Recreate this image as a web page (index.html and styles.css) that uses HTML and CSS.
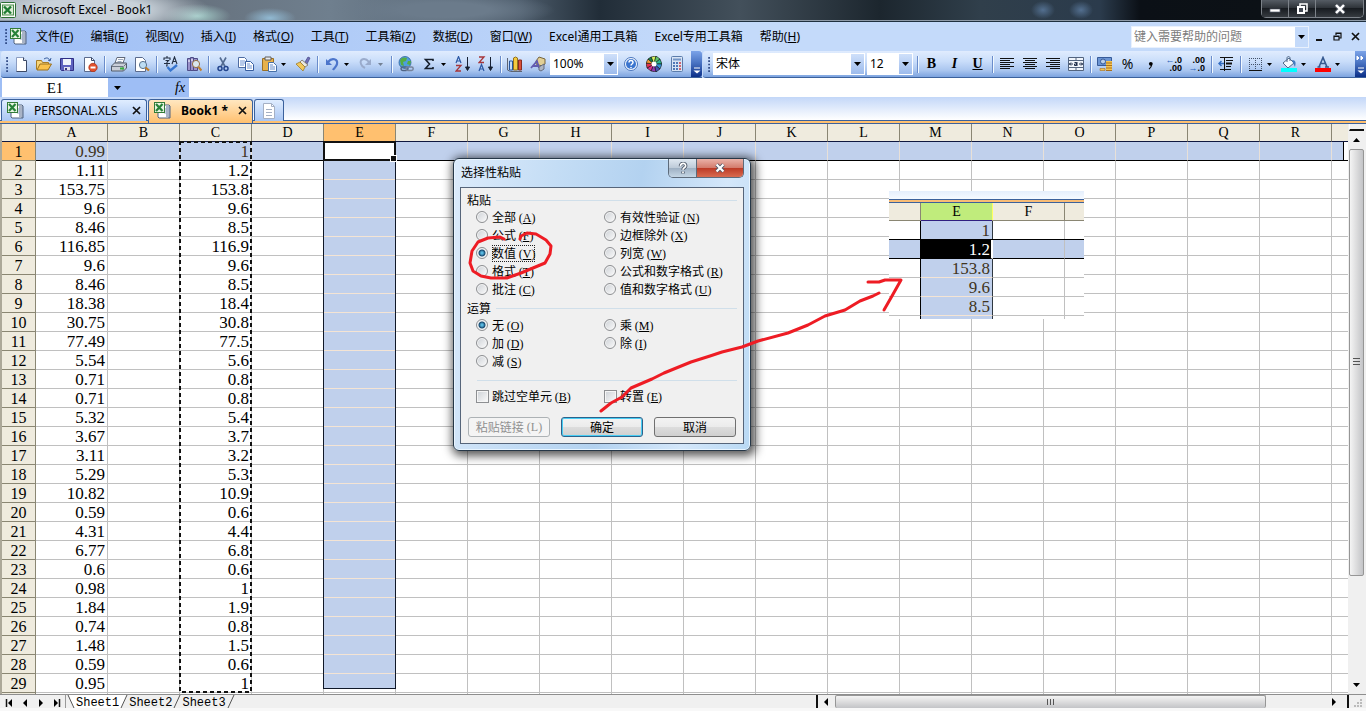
FILE: index.html
```html
<!DOCTYPE html>
<html lang="zh-CN">
<head>
<meta charset="utf-8">
<title>Microsoft Excel - Book1</title>
<link rel="stylesheet" href="styles.css">
</head>
<body>
<svg class="defs" aria-hidden="true">
  <symbol id="book" viewBox="0 0 17 17"><path d="M4 3h11l1 1v12H5l-1-1z" fill="#fff" stroke="#51637f"/><path d="M15 4v12M13 4v11" stroke="#52698e"/><path d="M10 7h3M10 9h3M10 11h3" stroke="#99abc7"/><rect x=".5" y=".5" width="10" height="10" fill="#e9f5e2" stroke="#347b38"/><path d="M2 2l6.500 7M8.500 2L2 9" stroke="#278238" stroke-width="2.200"/></symbol>
  <symbol id="down" viewBox="0 0 7 4"><path d="M0 0h7L3.500 4z"/></symbol>
  <symbol id="grip" viewBox="0 0 3 18"><path d="M0 1h2M0 5h2M0 9h2M0 13h2M0 17h2" stroke="#27417e" stroke-width="2"/></symbol>
  <symbol id="cross" viewBox="0 0 9 9"><path d="M1 1l7 7M8 1L1 8" stroke="#111" stroke-width="1.700"/></symbol>
</svg>

<header class="titlebar">
  <svg class="app-icon" viewBox="0 0 16 16"><rect x=".5" y=".5" width="15" height="15" rx="1" fill="#fafcf8" stroke="#2c7034"/><rect x="2.500" y="3" width="11" height="10" fill="#dcecd5" stroke="#4d8d4f"/><path d="M4 4.500l7 7M11 4.500l-7 7" stroke="#1d7c31" stroke-width="2.400"/></svg>
  <h1>Microsoft Excel - Book1</h1>
  <div class="window-buttons">
    <button aria-label="最小化"><svg viewBox="0 0 14 12"><rect x="2" y="6" width="10" height="3" fill="#fff" stroke="#5b6270" stroke-width=".7"/></svg></button>
    <button aria-label="还原"><svg viewBox="0 0 14 12"><path d="M5 3V1h7v7h-2" fill="none" stroke="#fff" stroke-width="1.500"/><rect x="3" y="4" width="6" height="6" fill="#444a54" stroke="#fff" stroke-width="2"/></svg></button>
    <button class="wide" aria-label="关闭"><svg viewBox="0 0 14 12"><path d="M3 2l8 8M11 2l-8 8" stroke="#555b66" stroke-width="4"/><path d="M3 2l8 8M11 2l-8 8" stroke="#fff" stroke-width="2.400"/></svg></button>
  </div>
</header>

<nav class="menubar">
  <svg class="grip"><use href="#grip"/></svg>
  <svg class="book"><use href="#book"/></svg>
  <div class="menus">
    <button>文件(<u>F</u>)</button><button>编辑(<u>E</u>)</button><button>视图(<u>V</u>)</button><button>插入(<u>I</u>)</button><button>格式(<u>O</u>)</button><button>工具(<u>T</u>)</button><button>工具箱(<u>Z</u>)</button><button>数据(<u>D</u>)</button><button>窗口(<u>W</u>)</button><button>Excel通用工具箱</button><button>Excel专用工具箱</button><button>帮助(<u>H</u>)</button>
  </div>
  <div class="ask"><input type="text" aria-label="帮助" placeholder="键入需要帮助的问题"><button aria-label="展开"><svg class="down"><use href="#down"/></svg></button></div>
  <div class="doc-buttons">
    <button aria-label="最小化窗口"><svg viewBox="0 0 9 9"><path d="M1 8h6" stroke="#111" stroke-width="2"/></svg></button>
    <button aria-label="还原窗口"><svg viewBox="0 0 9 9"><path d="M3 3V1h5v5H6M3 1.500h5" fill="none" stroke="#111" stroke-width="1.200"/><path d="M1 4h5v4H1zM1 4.500h5" fill="none" stroke="#111" stroke-width="1.200"/></svg></button>
    <button aria-label="关闭窗口"><svg><use href="#cross"/></svg></button>
  </div>
</nav>

<div class="toolbars">
<div class="toolbar" role="toolbar" aria-label="常用">
  <svg class="grip"><use href="#grip"/></svg>
  <button class="tool" aria-label="新建"><svg viewBox="0 0 16 16"><path d="M3.500 1.500h7l3 3v11h-10z" fill="#fff" stroke="#8b9cc0"/><path d="M13.500 4.500v11h-10" fill="none" stroke="#3b4966"/><path d="M10.500 1.500v3h3" fill="#dbe4f4" stroke="#3b4966"/></svg></button>
  <button class="tool" aria-label="打开"><svg viewBox="0 0 16 16"><path d="M.5 13.500v-9h5l1 2h6v3" fill="#f7d57a" stroke="#a87d26"/><path d="M1 14l3-6h11.500l-3.500 6z" fill="#f9c24b" stroke="#9a701f"/><path d="M8 3c3-2 5-1 6 2m0 0l-2-1m2 1l1-3" fill="none" stroke="#3a5f9f"/></svg></button>
  <button class="tool" aria-label="保存"><svg viewBox="0 0 16 16"><path d="M1.500 2.500h13v12h-12l-1-1z" fill="#5d62bf" stroke="#302f85"/><path d="M4 3h8v6H4z" fill="#eef3fb"/><path d="M5 11h6v3.500H5z" fill="#dfe0ef"/><path d="M6 12h2v2H6z" fill="#34347f"/></svg></button>
  <button class="tool" aria-label="权限"><svg viewBox="0 0 16 16"><path d="M2.500 1.500h7l3 3v11h-10z" fill="#fff" stroke="#5b6b8d"/><path d="M9.500 1.500v3h3" fill="none" stroke="#3b4966"/><circle cx="11" cy="11.500" r="4.200" fill="#e2512c" stroke="#a82c17" stroke-width=".7"/><path d="M8.500 11.500h5" stroke="#fff" stroke-width="2"/></svg></button>
  <span class="sep"></span>
  <button class="tool" aria-label="打印"><svg viewBox="0 0 16 16"><path d="M4 7l2-5.500h8L12 7z" fill="#fff" stroke="#61697a"/><path d="M7 3.500h5M6.500 5.500h4" stroke="#9ba8be"/><path d="M.5 10l3-3h12v5l-3 3h-12z" fill="#c9ced8" stroke="#515a69"/><path d="M1 10.500h11V15M12.500 10.500l3-3" fill="none" stroke="#6f7786"/><path d="M9 12.500h4" stroke="#35b13c" stroke-width="2"/></svg></button>
  <button class="tool" aria-label="打印预览"><svg viewBox="0 0 16 16"><path d="M1.500 1.500h7l3 3v11h-10z" fill="#fff" stroke="#5b6b8d"/><circle cx="9" cy="9" r="3.600" fill="#bdddf3" stroke="#59728e"/><path d="M11.500 11.500l3.500 3" stroke="#bd7b28" stroke-width="2.300"/></svg></button>
  <span class="sep"></span>
  <button class="tool" aria-label="拼写检查"><svg viewBox="0 0 16 16"><path d="M4 0v2M1 4V2h6v2M2.500 4.500h3L4 6M1 7.500h6M4 6v4H3M9 8l2.500-7L14 8M10 5.500h3" fill="none" stroke="#222e42" stroke-width="1.100"/><path d="M4.500 11l3 3.500L14 9" fill="none" stroke="#3675cf" stroke-width="2.300"/></svg></button>
  <button class="tool" aria-label="信息检索"><svg viewBox="0 0 16 16"><path d="M1.500 2.500h3v12h-3zM4.500 1.500h3v13h-3zM7.500 2.500h4v12h-4z" fill="#9b92ca" stroke="#4f4d88"/><path d="M2 5h2M5 4h2" stroke="#fff"/><circle cx="10" cy="8" r="3.600" fill="#d9e7ee" stroke="#967142"/><path d="M12.500 11l3 3.500" stroke="#c3802c" stroke-width="2.200"/></svg></button>
  <span class="sep"></span>
  <button class="tool" aria-label="剪切"><svg viewBox="0 0 16 16"><path d="M5 1.500l5 9M11 1.500l-5 9" stroke="#536b91" stroke-width="1.600"/><circle cx="5" cy="12.500" r="2" fill="none" stroke="#23458e" stroke-width="1.500"/><circle cx="11" cy="12.500" r="2" fill="none" stroke="#23458e" stroke-width="1.500"/></svg></button>
  <button class="tool" aria-label="复制"><svg viewBox="0 0 16 16"><path d="M.5 1.500h6l2 2v8h-8z" fill="#fff" stroke="#4e6ca2"/><path d="M2 5h5M2 7h5M2 9h4" stroke="#6f94d5"/><path d="M7.500 5.500h5l3 3v6h-8z" fill="#fff" stroke="#365da0"/><path d="M9 8h3M9 10h5M9 12h5" stroke="#6f94d5"/></svg></button>
  <button class="tool" aria-label="粘贴"><svg viewBox="0 0 16 16"><path d="M1.500 2.500h11v12h-11z" fill="#e7b14c" stroke="#9a7026"/><path d="M4 1h6v3H4z" fill="#e9ebef" stroke="#615f5a"/><path d="M7.500 6.500h5l3 3v6h-8z" fill="#f9fcff" stroke="#4770a8"/><path d="M9 9h3M9 11h5M9 13h5" stroke="#6b8fca"/></svg></button>
  <button class="drop" aria-label="粘贴选项"><svg class="down"><use href="#down"/></svg></button>
  <button class="tool" aria-label="格式刷"><svg viewBox="0 0 16 16"><path d="M10 6l3-5 2 1-3 6z" fill="#7070b8" stroke="#464685" stroke-width=".7"/><path d="M7 4l6 5-3 2-5-5z" fill="#e9e8e1" stroke="#787060" stroke-width=".8"/><path d="M1 8l4-2 5 5-2 4z" fill="#f1c85c" stroke="#9d7c2d" stroke-width=".8"/></svg></button>
  <span class="sep"></span>
  <button class="tool" aria-label="撤消"><svg viewBox="0 0 16 16"><path d="M4 6c4-5 10-3 9 2-.5 3-3 4-4 6" fill="none" stroke="#4c75cb" stroke-width="2.200"/><path d="M2 3v6h6z" fill="#4c75cb"/></svg></button>
  <button class="drop" aria-label="撤消列表"><svg class="down"><use href="#down"/></svg></button>
  <button class="tool" aria-label="恢复"><svg viewBox="0 0 16 16"><path d="M11 6C7 1 1 3 3 8c.5 2 2 3 4 4" fill="none" stroke="#9aabcb" stroke-width="2"/><path d="M13 3v6H7z" fill="#9aabcb"/></svg></button>
  <button class="drop muted" aria-label="恢复列表"><svg class="down"><use href="#down"/></svg></button>
  <span class="sep"></span>
  <button class="tool" aria-label="超链接"><svg viewBox="0 0 16 16"><circle cx="7" cy="6.500" r="6" fill="#4e9edf" stroke="#2f6299" stroke-width=".8"/><path d="M2 4c2-3 4-3 7-2L8 5 5 6l1 4-3-1zM10 5l3 0-1 4-3-1z" fill="#55ad42"/><rect x="3" y="11" width="7" height="3.500" rx="1.700" fill="none" stroke="#4f6485" stroke-width="1.500"/><rect x="8" y="11" width="7.200" height="3.500" rx="1.700" fill="none" stroke="#76839c" stroke-width="1.500"/></svg></button>
  <button class="tool" aria-label="自动求和"><svg viewBox="0 0 16 16"><path d="M12 5V3.500H4.500L8.500 8l-4 4.500H12V11" fill="none" stroke="#151e2b" stroke-width="1.600"/></svg></button>
  <button class="drop" aria-label="求和选项"><svg class="down"><use href="#down"/></svg></button>
  <button class="tool" aria-label="升序排序"><svg viewBox="0 0 16 16"><path d="M1 7l2.500-6.500L6 7M2 5h3" fill="none" stroke="#2b58a5" stroke-width="1.200"/><path d="M1 9.500h5L1 15h5" fill="none" stroke="#a63539" stroke-width="1.300"/><path d="M12.500 1v13M10.500 11l2 3.500 2-3.500z" fill="#172133" stroke="#172133"/></svg></button>
  <button class="tool" aria-label="降序排序"><svg viewBox="0 0 16 16"><path d="M1 1h5L1 6.500h5" fill="none" stroke="#a63539" stroke-width="1.300"/><path d="M1 15l2.500-6.500L6 15M2 13h3" fill="none" stroke="#2b58a5" stroke-width="1.200"/><path d="M12.500 1v13M10.500 11l2 3.500 2-3.500z" fill="#172133" stroke="#172133"/></svg></button>
  <span class="sep"></span>
  <button class="tool" aria-label="图表向导"><svg viewBox="0 0 16 16"><path d="M.5 2v12l3 1.500H15" fill="none" stroke="#5d6472"/><path d="M2.500 5h3v9h-3z" fill="#c3daf5" stroke="#28569b"/><path d="M6.500 2l2-1 2 1v12h-4z" fill="#f5ca3e" stroke="#93721b"/><path d="M11.500 4h3v10h-3z" fill="#da5037" stroke="#882c21"/></svg></button>
  <button class="tool" aria-label="绘图"><svg viewBox="0 0 16 16"><path d="M6 5l3-4 6 2v5l-3 2-6-2z" fill="#e2cf94" stroke="#77653c"/><path d="M1 12L7 5l2 7M3 10h5" fill="none" stroke="#625bb0" stroke-width="1.800"/><path d="M9 11l5-3v5l-3 2-2-1z" fill="#aeb5c2" stroke="#646d81"/></svg></button>
  <label class="combo zoom"><select aria-label="显示比例"><option>100%</option></select><span><svg class="down"><use href="#down"/></svg></span></label>
  <button class="tool" aria-label="帮助"><svg viewBox="0 0 16 16"><circle cx="8" cy="8" r="6.500" fill="#f6faff" stroke="#4b76bd"/><circle cx="8" cy="8" r="5" fill="#3b75cf"/><path d="M6 6.500c0-3 4-2.500 4 0C10 8 8 8 8 9.500M8 11v1.200" fill="none" stroke="#fff" stroke-width="1.500"/></svg></button>
  <button class="tool" aria-label="颜色"><svg viewBox="0 0 16 16"><g stroke="#111" stroke-width=".6"><path d="M8 8L5 1l5-1z" fill="#d9f25f"/><path d="M8 8l2-8 4 3z" fill="#60c56b"/><path d="M8 8l6-5 2 5z" fill="#2bb58b"/><path d="M8 8h8l-2 5z" fill="#3493d4"/><path d="M8 8l6 5-4 3z" fill="#4452b3"/><path d="M8 8l2 8-5-1z" fill="#913ab1"/><path d="M8 8l-3 7-4-3z" fill="#d62f8c"/><path d="M8 8l-7 4-1-5z" fill="#e4304d"/><path d="M8 8L0 7l2-4z" fill="#f19a38"/><path d="M8 8L2 3l3-2z" fill="#198348"/></g><circle cx="8" cy="8" r="2.500" fill="#fff"/></svg></button>
  <button class="tool" aria-label="计算器"><svg viewBox="0 0 16 16"><rect x="2.500" y=".5" width="11" height="15" rx="1" fill="#d8e4f5" stroke="#5b7cab"/><path d="M4 3.500h8" stroke="#7596c7" stroke-width="2"/><path d="M4 7h2M7 7h2M4 10h2M7 10h2M4 13h2M7 13h2" stroke="#5179b8" stroke-width="2"/><path d="M10 7h2M10 10h2M10 13h2" stroke="#ce6570" stroke-width="2"/></svg></button>
  <button class="cap first" aria-label="工具栏选项"><svg viewBox="0 0 9 22"><path d="M2 15h6" stroke="#fff"/><path d="M1.500 17.500h7l-3.500 3z" fill="#fff"/></svg></button>
</div>
<div class="toolbar formatting" role="toolbar" aria-label="格式">
  <svg class="grip"><use href="#grip"/></svg>
  <label class="combo font"><select aria-label="字体"><option>宋体</option></select><span><svg class="down"><use href="#down"/></svg></span></label>
  <label class="combo size"><select aria-label="字号"><option>12</option></select><span><svg class="down"><use href="#down"/></svg></span></label>
  <span class="sep"></span>
  <button class="tool letter"><b>B</b></button><button class="tool letter"><i>I</i></button><button class="tool letter"><u>U</u></button>
  <span class="sep"></span>
  <button class="tool" aria-label="左对齐"><svg viewBox="0 0 16 16"><path d="M1 2.500h14M1 4.500h10M1 6.500h14M1 8.500h10M1 10.500h14M1 12.500h10" stroke="#111"/></svg></button>
  <button class="tool" aria-label="居中"><svg viewBox="0 0 16 16"><path d="M1 2.500h14M3 4.500h10M1 6.500h14M3 8.500h10M1 10.500h14M3 12.500h10" stroke="#111"/></svg></button>
  <button class="tool" aria-label="右对齐"><svg viewBox="0 0 16 16"><path d="M1 2.500h14M5 4.500h10M1 6.500h14M5 8.500h10M1 10.500h14M5 12.500h10" stroke="#111"/></svg></button>
  <button class="tool" aria-label="合并及居中"><svg viewBox="0 0 16 16"><path d="M.5 1.500h15v13H.5zM.5 4.500h15M.5 11.500h15M8 1.500v3M8 11.500v3" fill="#f1f5fb" stroke="#53647f"/><path d="M1 8h4M3 6.500L1.500 8 3 9.500M15 8h-4M13 6.500L14.500 8 13 9.500M6.500 6.500h2v3h-2v-1.500h2M9 6v4" fill="none" stroke="#1c2b46"/></svg></button>
  <span class="sep"></span>
  <button class="tool" aria-label="货币样式"><svg viewBox="0 0 16 16"><path d="M.5 1.500h14v8H.5z" fill="#6b94d3" stroke="#375b99"/><circle cx="6" cy="5.500" r="2.500" fill="#b9cfeb" stroke="#385b98"/><rect x="9" y="5" width="6" height="10" fill="#f4c451"/><path d="M9 7h6M9 9.500h6M9 12h6M9 14.500h6" stroke="#a9701f"/><path d="M3 12.500h5v2H3z" fill="#f4c451" stroke="#a9701f" stroke-width=".6"/></svg></button>
  <button class="tool percent">%</button>
  <button class="tool" aria-label="千位分隔样式"><svg viewBox="0 0 16 16"><path d="M8.500 9c0 2-1 3-2.500 4" fill="none" stroke="#111" stroke-width="1.200"/><circle cx="7.800" cy="7.800" r="1.900"/></svg></button>
  <button class="tool decimal" aria-label="增加小数位数"><span><em>←</em>.0</span><span>.00</span></button>
  <button class="tool decimal" aria-label="减少小数位数"><span>.00</span><span><em>→</em>.0</span></button>
  <span class="sep"></span>
  <button class="tool" aria-label="减少缩进"><svg viewBox="0 0 16 16"><path d="M2 1.500h13M8 4.500h7M8 10.500h5M2 13.500h11M6.500 1v14" stroke="#111"/><path d="M8 7.500h6" stroke="#111" stroke-width="2"/><path d="M6 7.500H1M3.500 5L1 7.500 3.500 10" fill="none" stroke="#316bc0" stroke-width="1.500"/></svg></button>
  <span class="sep"></span>
  <button class="tool" aria-label="边框"><svg viewBox="0 0 16 16"><path d="M2 2.500h12M2 8.500h12M2.500 2v12M8.500 2v12M14.500 2v12" stroke="#425168" stroke-dasharray="1 1"/><path d="M2 14.500h13" stroke="#111"/></svg></button>
  <button class="drop" aria-label="边框选项"><svg class="down"><use href="#down"/></svg></button>
  <button class="tool" aria-label="填充颜色"><svg viewBox="0 0 16 16"><path d="M2 7l6-5 5 5-6 5z" fill="#f7faff" stroke="#506988"/><path d="M6 6V2c0-2 3-2 3 0v3" fill="none" stroke="#506988"/><path d="M11 4c4 0 4 3 3 7l-2-4z" fill="#447bbf"/><path d="M0 12h16v4H0z" fill="#0ff"/></svg></button>
  <button class="drop" aria-label="填充选项"><svg class="down"><use href="#down"/></svg></button>
  <button class="tool" aria-label="字体颜色"><svg viewBox="0 0 16 16"><path d="M4 11L8 1.500l4 9.500M5.500 7.500h5M2.500 11h3M10 11h4" fill="none" stroke="#36598f" stroke-width="1.600"/><path d="M0 12h16v4H0z" fill="#f00"/></svg></button>
  <button class="drop" aria-label="颜色选项"><svg class="down"><use href="#down"/></svg></button>
  <button class="cap last" aria-label="更多按钮"><svg viewBox="0 0 9 22"><path d="M1 3l2 2-2 2zM5 3l2 2-2 2z" fill="#fff" stroke="#fff"/><path d="M2 15h6" stroke="#fff"/><path d="M1.500 17.500h7l-3.500 3z" fill="#fff"/></svg></button>
</div>
</div>

<div class="formula-bar">
  <input class="name-box" type="text" aria-label="名称框" value="E1">
  <button class="name-drop" aria-label="名称列表"><svg class="down"><use href="#down"/></svg></button>
  <button class="fx" aria-label="插入函数">fx</button>
  <input class="formula" type="text" aria-label="编辑栏">
</div>

<div class="doc-tabs">
  <div class="doc-tab personal"><svg class="book"><use href="#book"/></svg><span>PERSONAL.XLS</span><button aria-label="关闭 PERSONAL.XLS"><svg><use href="#cross"/></svg></button></div>
  <div class="doc-tab active"><svg class="book"><use href="#book"/></svg><span>Book1 *</span><button aria-label="关闭 Book1"><svg><use href="#cross"/></svg></button></div>
  <button class="doc-tab blank" aria-label="新建工作簿"><svg viewBox="0 0 14 16"><path d="M1.500.5h8l3 3v12h-11z" fill="#fff" stroke="#a5b0c4"/><path d="M9.500.5v3h3M4 6.500h6M4 9.500h6M4 12.500h6" fill="none" stroke="#a5b0c4"/></svg></button>
</div>

<main class="workspace">
  <div class="sheet">
    <table class="grid"><thead></thead><tbody></tbody></table>
    <div class="column-selection"></div>
    <div class="active-cell"></div>
    <div class="row-end"></div>
    <svg class="copied-range"><rect x="1" y="1" width="71" height="550" fill="none" stroke="#111" stroke-width="2" stroke-dasharray="4 3"/></svg>
  </div>
  <div class="vscroll">
    <div class="split"></div>
    <button aria-label="向上滚动"><svg viewBox="0 0 7 4"><path d="M0 4h7L3.500 0z"/></svg></button>
    <div class="track"><div class="thumb"><i></i><i></i><i></i></div></div>
    <button aria-label="向下滚动"><svg class="down"><use href="#down"/></svg></button>
  </div>
</main>

<footer class="bottom">
  <div class="sheet-nav">
    <button aria-label="第一张"><svg viewBox="0 0 8 8"><path d="M1.500 0v8" stroke="#111" stroke-width="1.500"/><path d="M7 0L3 4l4 4z"/></svg></button>
    <button aria-label="上一张"><svg viewBox="0 0 8 8"><path d="M6 0L2 4l4 4z"/></svg></button>
    <button aria-label="下一张"><svg viewBox="0 0 8 8"><path d="M2 0l4 4-4 4z"/></svg></button>
    <button aria-label="最后一张"><svg viewBox="0 0 8 8"><path d="M6.500 0v8" stroke="#111" stroke-width="1.500"/><path d="M1 0l4 4-4 4z"/></svg></button>
  </div>
  <div class="sheet-tabs">
    <svg class="slash" viewBox="0 0 10 13"><path d="M2 0h8v13H8z" fill="#fff"/><path d="M2 0l6 13" stroke="#555"/></svg>
    <button class="current">Sheet1</button>
    <svg class="slash" viewBox="0 0 10 13"><path d="M0 0h8L2 13H0z" fill="#fff"/><path d="M8 0L2 13" stroke="#555"/></svg>
    <button>Sheet2</button>
    <svg class="slash" viewBox="0 0 10 13"><path d="M8 0L2 13" stroke="#555"/></svg>
    <button>Sheet3</button>
    <svg class="slash" viewBox="0 0 10 13"><path d="M8 0L2 13" stroke="#555"/></svg>
  </div>
  <div class="hscroll">
    <button aria-label="向左滚动"><svg viewBox="0 0 5 8"><path d="M4 0v8L0 4z"/></svg></button>
    <div class="track"><div class="thumb"><i></i><i></i><i></i></div></div>
    <button aria-label="向右滚动"><svg viewBox="0 0 5 8"><path d="M1 0v8l4-4z"/></svg></button>
  </div>
  <div class="corner"><svg viewBox="0 0 10 10"><path d="M8 2h2M5 5h2M8 5h2M2 8h2M5 8h2M8 8h2" stroke="#bbb" stroke-width="2"/></svg></div>
</footer>

<section class="dialog" role="dialog" aria-labelledby="dialog-title">
  <header>
    <h2 id="dialog-title">选择性粘贴</h2>
    <div class="dialog-buttons">
      <button aria-label="帮助"><svg viewBox="0 0 14 14"><path d="M4 5c0-5 7-4 6 0-.5 2-3 1.500-3 4M7 11v2.500" fill="none" stroke="#4b5667" stroke-width="4"/><path d="M4 5c0-5 7-4 6 0-.5 2-3 1.500-3 4M7 11v2" fill="none" stroke="#fff" stroke-width="2"/></svg></button>
      <button class="close" aria-label="关闭"><svg viewBox="0 0 14 14"><path d="M3 3l8 8M11 3l-8 8" stroke="#50596a" stroke-width="4.500"/><path d="M3 3l8 8M11 3l-8 8" stroke="#fff" stroke-width="2.600"/></svg></button>
    </div>
  </header>
  <form>
    <div class="group-title"><span>粘贴</span></div>
    <div class="options">
      <label><input type="radio" name="paste"><span>全部 <kbd>(<u>A</u>)</kbd></span></label>
      <label><input type="radio" name="paste"><span>有效性验证 <kbd>(<u>N</u>)</kbd></span></label>
      <label><input type="radio" name="paste"><span>公式 <kbd>(<u>F</u>)</kbd></span></label>
      <label><input type="radio" name="paste"><span>边框除外 <kbd>(<u>X</u>)</kbd></span></label>
      <label><input type="radio" name="paste" checked><span class="focused">数值 <kbd>(<u>V</u>)</kbd></span></label>
      <label><input type="radio" name="paste"><span>列宽 <kbd>(<u>W</u>)</kbd></span></label>
      <label><input type="radio" name="paste"><span>格式 <kbd>(<u>T</u>)</kbd></span></label>
      <label><input type="radio" name="paste"><span>公式和数字格式 <kbd>(<u>R</u>)</kbd></span></label>
      <label><input type="radio" name="paste"><span>批注 <kbd>(<u>C</u>)</kbd></span></label>
      <label><input type="radio" name="paste"><span>值和数字格式 <kbd>(<u>U</u>)</kbd></span></label>
    </div>
    <div class="group-title next"><span>运算</span></div>
    <div class="options">
      <label><input type="radio" name="op" checked><span>无 <kbd>(<u>O</u>)</kbd></span></label>
      <label><input type="radio" name="op"><span>乘 <kbd>(<u>M</u>)</kbd></span></label>
      <label><input type="radio" name="op"><span>加 <kbd>(<u>D</u>)</kbd></span></label>
      <label><input type="radio" name="op"><span>除 <kbd>(<u>I</u>)</kbd></span></label>
      <label><input type="radio" name="op"><span>减 <kbd>(<u>S</u>)</kbd></span></label>
    </div>
    <hr>
    <div class="options">
      <label><input type="checkbox"><span>跳过空单元 <kbd>(<u>B</u>)</kbd></span></label>
      <label><input type="checkbox"><span>转置 <kbd>(<u>E</u>)</kbd></span></label>
    </div>
    <div class="actions">
      <button type="button" disabled>粘贴链接 <kbd>(L)</kbd></button>
      <button type="button" class="default">确定</button>
      <button type="button">取消</button>
    </div>
  </form>
</section>

<figure class="result">
  <div class="strip"></div>
  <table>
    <tr><th></th><th class="picked">E</th><th>F</th><th></th></tr>
    <tr><td></td><td class="picked">1</td><td></td><td></td></tr>
    <tr class="active-row"><td></td><td class="current">1.2</td><td></td><td></td></tr>
    <tr><td></td><td class="picked">153.8</td><td></td><td></td></tr>
    <tr><td></td><td class="picked">9.6</td><td></td><td></td></tr>
    <tr><td></td><td class="picked">8.5</td><td></td><td></td></tr>
    <tr><td></td><td class="picked"></td><td></td><td></td></tr>
  </table>
</figure>

<svg class="ink" viewBox="460 220 450 200" aria-hidden="true">
  <g fill="none" stroke="#ee1c24" stroke-width="3" stroke-linecap="round" stroke-linejoin="round">
    <path d="M504 239L500 237 488 238 478 242 472 251 470 263 473 271 481 276 491 278 507 278 521 273 533 268 545 263 550 254 551 246 546 240 536 234 527 233 521 236 520 239"/>
    <path d="M601 411L611 403 622 397 631 388 652 379 664 373 691 362 710 356 722 352 742 347 758 341 788 333 808 325 825 316 845 310 860 301 873 296 879 293"/>
    <path d="M868 282L879 282 885 280 901 280 892 296 884 310"/>
  </g>
</svg>
<script src="app.js"></script>
</body>
</html>
```
FILE: styles.css
```css
* { box-sizing: border-box; }
:root {
  --ui: "Noto Sans", "Noto Sans CJK SC", sans-serif;
  --cell: "Liberation Serif", "Noto Sans CJK SC", serif;
  --selected: #c0d0ec;
  --header: #efebde;
  --orange: #ffc06f;
}
body { margin: 0; height: 100vh; display: flex; flex-direction: column; overflow: hidden; background: #c3d9f9; font: 12px/16px var(--ui); color: #000; position: relative; }
button, input, select { font: inherit; color: inherit; border: 0; padding: 0; margin: 0; background: none; border-radius: 0; outline: 0; }
button { display: flex; align-items: center; justify-content: center; white-space: nowrap; }
svg { display: block; flex: none; }
.defs { position: absolute; width: 0; height: 0; }
.down { width: 7px; height: 4px; }
.grip { width: 3px; height: 18px; }
.book { width: 17px; height: 17px; }

/* Title bar */
.titlebar { flex: none; height: 22px; display: flex; align-items: center; padding: 0 2px 2px 0; border-bottom: 1px solid #20303f; box-shadow: inset 0 -1px #8f9ba8;
  background: radial-gradient(ellipse 120px 26px at 90px 10px, #c9d2da 45%, transparent), radial-gradient(ellipse 34px 12px at 197px 16px, #a6cfcb, transparent), radial-gradient(ellipse 26px 10px at 270px 18px, #91b9d2, transparent), radial-gradient(ellipse 110px 18px at 445px 10px, #6b7b8b 40%, transparent), radial-gradient(ellipse 12px 9px at 1043px 10px, #536f8f, transparent), radial-gradient(ellipse 12px 9px at 1081px 10px, #536f8f, transparent), linear-gradient(90deg, #a3adb7, #66717d 180px, #6f7f8e 330px, #4d5c6b 520px, #212d38 600px, #43505b 740px, #1c262e 880px, #303f4b 980px, #2b3b4c 1100px, #0b1016 1140px, #0c1116 1260px, #252b32); }
.app-icon { width: 16px; height: 16px; }
.titlebar h1 { margin: 0 0 0 6px; font: 12px/20px var(--ui); }
.window-buttons { align-self: flex-start; margin-left: auto; display: flex; height: 18px; border: 1px solid #7c8289; border-top: 0; border-radius: 0 0 5px 5px; }
.window-buttons button { width: 27px; background: linear-gradient(#555c64, #2b3036 50%, #181c21 50%, #353a40); border-right: 1px solid #7c8289; }
.window-buttons .wide { width: 47px; border: 0; border-radius: 0 0 4px 0; }
.window-buttons svg { width: 14px; height: 12px; }

/* Menu bar */
.menubar { flex: none; height: 29px; display: flex; align-items: center; padding: 0 6px 0 5px; background: linear-gradient(90deg, #9ebef5, #c4dafa 700px); }
.menubar .book { margin: 0 9px 0 2px; }
.menubar .grip { height: 15px; }
.menus { display: flex; gap: 17px; flex: 1; min-width: 0; }
.ask { display: flex; width: 178px; height: 22px; background: #fff; border: 1px solid #e9f1fd; }
.ask input { flex: 1; min-width: 0; padding-left: 2px; }
.ask input::placeholder { color: #7c7c7c; opacity: 1; }
.ask button { width: 13px; background: #c4dafa; }
.doc-buttons { display: flex; gap: 9px; margin-left: 6px; }
.doc-buttons svg { width: 9px; height: 9px; }

/* Toolbars */
.toolbars { flex: none; display: flex; height: 27px; background: #c3d9f9; }
.toolbar { display: flex; align-items: center; padding-left: 5px; margin-left: 1px; border-bottom: 1px solid #3b619c; border-radius: 3px 0 0 3px; background: linear-gradient(#e0ecfe, #c9ddfa 40%, #a9c5ef 75%, #7ca3df); }
.toolbar .grip { height: 15px; }
.formatting { flex: 1; padding-left: 5px; }
.formatting .grip { margin-right: 1px; }
.tool { width: 23px; height: 23px; }
.tool svg { width: 16px; height: 16px; }
.drop { width: 11px; height: 23px; padding-right: 4px; }
.drop .down { width: 5px; height: 3px; }
.muted { opacity: .4; }
.sep { flex: none; width: 6px; height: 17px; border-left: 1px solid #6a8ccb; border-right: 4px solid transparent; background: #f1f9ff; background-clip: padding-box; margin-left: 3px; margin-right: -3px; }
.combo { display: flex; flex: none; height: 22px; background: #fff; }
.combo select { appearance: none; flex: 1; min-width: 0; padding: 0 0 1px 3px; }
.combo > span { width: 15px; display: flex; align-items: center; justify-content: center; border: 1px solid #fff; background: linear-gradient(#cfe0fa, #9dbbec); }
.zoom { width: 68px; margin: 0 1px; }
.font { width: 152px; margin: 0 1px; }
.size { width: 46px; margin: 0 1px; }
.letter { font: bold 14px/20px "Liberation Serif", serif; }
.percent { font: 14px/20px "Open Sans", sans-serif; }
.decimal { flex-direction: column; align-items: flex-end; padding-right: 3px; font: bold 9px/8px "Liberation Sans", sans-serif; }
.decimal em { color: #2b61b8; font-style: normal; }
.cap { height: 26px; background: linear-gradient(#7ba3e8, #4a74c3 45%, #0b2f88); align-self: flex-start; }
.cap svg { width: 9px; height: 22px; }
.first { width: 11px; margin-left: 3px; border-radius: 0 3px 3px 0; }
.last { width: 11px; margin-left: auto; }

/* Formula bar */
.formula-bar { flex: none; display: flex; height: 19px; padding-left: 2px; background: #9ebef5; }
.name-box { width: 106px; background: #fff; text-align: center; font: 15px/18px var(--cell); }
.name-drop { width: 19px; }
.fx { width: 62px; padding-left: 48px; justify-content: flex-start; font: italic 14px/16px "Liberation Serif", serif; }
.formula { flex: 1; background: #fff; }

/* Workbook tabs */
.doc-tabs { flex: none; height: 27px; padding: 2px 0 0 1px; display: flex; gap: 1px; border-bottom: 1px solid #3b619c; background: linear-gradient(var(--orange), var(--orange)) 0 24px / 100% 2px no-repeat, linear-gradient(#3b619c, #3b619c) 0 23px / 100% 1px no-repeat, linear-gradient(#c3d7f8, #fff 23px); }
.doc-tab { height: 22px; display: flex; align-items: center; padding: 0 5px; border: 1px solid #3b619c; border-bottom: 0; border-radius: 3px 3px 0 0; background: linear-gradient(#e0edff, #a9c6f3); font-size: 12px; }
.doc-tab .book { margin-right: 10px; }
.doc-tab button { margin-left: auto; }
.doc-tab button svg { width: 9px; height: 9px; }
.personal { width: 146px; }
.doc-tab.active { width: 105px; height: 24px; padding-bottom: 2px; background: linear-gradient(#ffe7c0, var(--orange)); font-weight: bold; }
.doc-tab.blank { width: 30px; }
.blank svg { width: 14px; height: 16px; }

/* Worksheet */
.workspace { flex: 1; min-height: 0; display: flex; background: #fff; }
.sheet { flex: 1; min-width: 0; overflow: hidden; position: relative; border-left: 2px solid #aca899; }
.grid { table-layout: fixed; width: 1402px; border-collapse: separate; border-spacing: 0; font: 17px/16px var(--cell); }
.grid th, .grid td { height: 19px; padding: 2px 0 0; border-right: 1px solid #c0c0c0; border-bottom: 1px solid #c0c0c0; font-weight: normal; overflow: hidden; white-space: nowrap; }
.grid thead th { width: 72px; height: 18px; padding-top: 1px; font-size: 14px; background: var(--header); border-right-color: #8a8673; border-bottom-color: #101840; }
.grid thead th:first-child { width: 34px; }
.grid tbody th { background: var(--header); border-right-color: #8a8673; border-bottom-color: #8a8673; font-size: 16px; }
.grid .hot { background: var(--orange) !important; }
.grid td { text-align: right; padding-right: 2px; }
.grid .first-row td { background: var(--selected); border-bottom-color: #000; border-right-color: #e8e0d8; color: #403420; }
.column-selection { position: absolute; left: 321px; top: 17px; width: 73px; height: 548px; border: 1px solid #101828; background: repeating-linear-gradient(var(--selected) 0 18px, #f4e4d4 18px 19px); }
.active-cell { position: absolute; left: 321px; top: 17px; width: 73px; height: 20px; border: 2px solid #111; background: #fff; }
.active-cell::after { content: ""; position: absolute; right: -3px; bottom: -3px; width: 5px; height: 5px; background: #111; border: 1px solid #fff; }
.row-end { position: absolute; right: 0; top: 18px; width: 5px; height: 18px; border-left: 1px solid #000; background: #fff; }
.copied-range { position: absolute; left: 177px; top: 17px; width: 73px; height: 552px; }

/* Scrollbars */
.vscroll { flex: none; width: 18px; padding: 0 2px 0 1px; display: flex; flex-direction: column; background: #f0f0f0; }
.split { height: 7px; border-bottom: 2px solid #111; border-left: 1px solid #fff; }
.vscroll button { height: 18px; }
.vscroll button svg { width: 7px; height: 4px; }
.track { flex: 1; min-width: 0; min-height: 0; display: flex; }
.thumb { display: flex; align-items: center; justify-content: center; gap: 1px; border: 1px solid #969696; border-radius: 2px; background: linear-gradient(#f4f4f4, #dcdcdd 50%, #c3c4c7); }
.vscroll .track { display: block; }
.vscroll .thumb { height: 81%; flex-direction: column; background: linear-gradient(90deg, #f4f4f4, #dcdcdd 50%, #c3c4c7); }
.vscroll i { width: 7px; height: 2px; border-top: 1px solid #555; }
.bottom { flex: none; height: 17px; display: flex; border-top: 1px solid #8e8e8e; border-bottom: 3px solid #f8f8f8; background: #f0f0f0; }
.sheet-nav { display: flex; width: 66px; padding: 2px 0 0 1px; justify-content: space-between; border-right: 1px solid #999; }
.sheet-nav button { width: 15px; }
.sheet-nav svg { width: 8px; height: 8px; }
.sheet-tabs { flex: 1; min-width: 0; display: flex; overflow: hidden; font: 12px/12px "Liberation Mono", monospace; }
.sheet-tabs button { padding-top: 2px; }
.slash { width: 10px; height: 13px; }
.sheet-tabs .current { background: #fff; }
.hscroll { width: 39%; display: flex; border-left: 2px solid #111; border-right: 2px solid #111; }
.hscroll button { width: 17px; }
.hscroll > button svg { width: 5px; height: 8px; }
.hscroll button:last-child { margin-right: 5px; }
.hscroll .thumb { width: 88%; border-bottom: 0; }
.hscroll i { width: 2px; height: 6px; border-left: 1px solid #555; }
.corner { width: 17px; padding: 3px; }
.corner svg { width: 10px; height: 10px; }

/* Paste special dialog */
.dialog { position: absolute; left: 453px; top: 158px; width: 298px; padding: 0 6px 6px; border: 1px solid #263747; border-radius: 6px; box-shadow: 2px 2px 10px 3px rgba(0, 0, 0, .65), inset 0 0 0 1px #e9f5ff; background: linear-gradient(100deg, #dcebfb, #c4ddf5 30%, #b3d2f0 55%, #d4e7fa 80%, #b9d9f4); }
.dialog header { height: 28px; display: flex; align-items: center; justify-content: space-between; }
.dialog h2 { margin: 0 0 0 1px; font: 12px/16px var(--ui); }
.dialog-buttons { align-self: flex-start; display: flex; height: 19px; border: 1px solid #5d6b7b; border-top: 0; border-radius: 0 0 5px 5px; overflow: hidden; }
.dialog-buttons button { width: 28px; background: linear-gradient(#dfe8f1, #bdcad8 50%, #9dafc2 50%, #c5d6e5); border-right: 1px solid #5d6b7b; }
.dialog-buttons .close { width: 46px; border: 0; background: linear-gradient(#eab2a8, #d37a6b 50%, #bc3925 50%, #d96b50); }
.dialog-buttons svg { width: 12px; height: 12px; }
.dialog form { border: 1px solid #56657a; background: #f0f0f0; padding: 4px 6px 6px; font: 12px/16px "Noto Sans CJK SC", sans-serif; }
.dialog kbd { font: 12px/16px "Liberation Serif", serif; }
.group-title { height: 16px; display: flex; align-items: center; gap: 5px; }
.group-title.next { margin-top: 2px; }
.group-title::after { content: ""; flex: 1; height: 1px; background: #d0dfea; }
.options { display: grid; grid-template-columns: 128px 1fr; grid-auto-rows: 18px; padding-left: 9px; }
.options label { display: flex; align-items: center; white-space: nowrap; }
.options input { appearance: none; flex: none; width: 12px; height: 12px; margin-right: 4px; border: 1px solid #8d8f92; background: linear-gradient(135deg, #cdd1d6, #fbfbfb); box-shadow: inset 0 0 0 1px #f5f5f5; }
.options input[type="radio"] { border-radius: 50%; }
.options input[type="radio"]:checked { background: radial-gradient(circle, #58b8e0 0 1px, #17496f 3px, #e9eef2 4px); }
.options input[type="checkbox"] { width: 13px; height: 13px; margin-right: 3px; }
.focused { outline: 1px dotted #222; outline-offset: -1px; line-height: 16px; }
.dialog hr { margin: 10px 0 6px 10px; border: 0; height: 1px; background: #d0dfea; }
.actions { display: grid; grid-template-columns: repeat(3, 1fr); gap: 11px; padding: 12px 1px 0; }
.actions button { height: 20px; border: 1px solid #707070; border-radius: 3px; background: linear-gradient(#f3f3f3, #ebebeb 50%, #dddddd 50%, #cfcfcf); }
.actions .default { border-color: #2c628b; box-shadow: inset 0 0 0 1px #48cdf4; }
.actions button:disabled { gap: 3px; color: #909090; border-color: #adb2b5; background: #f4f4f4; }

/* Pasted result picture */
.result { position: absolute; left: 889px; top: 191px; width: 195px; height: 128px; margin: 0; overflow: hidden; background: #fff; }
.strip { height: 12px; border-bottom: 1px solid #3b619c; background: linear-gradient(#e4eefc, #f6faff 8px, #3b619c 8px 9px, #f8bc75 9px); }
.result table { table-layout: fixed; width: 248px; border-collapse: separate; border-spacing: 0; font: 17px/16px var(--cell); }
.result th { height: 18px; padding: 1px 0 0; font-size: 14px; font-weight: normal; background: var(--header); border-right: 1px solid #8a8673; border-bottom: 1px solid #8a8673; width: 72px; }
.result th:first-child { width: 32px; }
.result td { height: 19px; padding: 2px 2px 0; text-align: right; border-right: 1px solid #c0c0c0; border-bottom: 1px solid #c0c0c0; color: #403420; }
.result th.picked { background: #c0ec7c; border-bottom-color: #302080; border-right-color: #ffff60; }
.result td.picked { background: var(--selected); border-right-color: #303840; border-bottom-color: #f4e4d4; }
.result td:first-child { border-right-color: #000; }
.result .active-row td { background: var(--selected); border-bottom-color: #000; box-shadow: 0 -1px #000; }
.result .active-row .current { background: #000; color: #fff; border-right: 2px solid #fff; padding-right: 1px; }

.ink { position: absolute; left: 460px; top: 220px; width: 450px; height: 200px; pointer-events: none; }
```
FILE: app.js
```js
const columns = "ABCDEFGHIJKLMNOPQRS".split("");
const before = ["0.99", "1.11", "153.75", "9.6", "8.46", "116.85", "9.6", "8.46", "18.38", "30.75", "77.49", "5.54", "0.71", "0.71", "5.32", "3.67", "3.11", "5.29", "10.82", "0.59", "4.31", "6.77", "0.6", "0.98", "1.84", "0.74", "1.48", "0.59", "0.95"];
const rounded = ["1", "1.2", "153.8", "9.6", "8.5", "116.9", "9.6", "8.5", "18.4", "30.8", "77.5", "5.6", "0.8", "0.8", "5.4", "3.7", "3.2", "5.3", "10.9", "0.6", "4.4", "6.8", "0.6", "1", "1.9", "0.8", "1.5", "0.6", "1"];

const head = columns.map((c) => `<th${c === "E" ? ' class="hot"' : ""}>${c === "S" ? "" : c}</th>`).join("");
document.querySelector(".grid thead").innerHTML = `<tr><th></th>${head}</tr>`;

let rows = "";
for (let r = 0; r <= before.length; r++) {
  const cells = columns.map((c) => {
    const value = c === "A" ? before[r] : c === "C" ? rounded[r] : "";
    return `<td>${value || ""}</td>`;
  }).join("");
  const label = r < before.length ? r + 1 : "";
  rows += `<tr${r === 0 ? ' class="first-row"' : ""}><th${r === 0 ? ' class="hot"' : ""}>${label}</th>${cells}</tr>`;
}
document.querySelector(".grid tbody").innerHTML = rows;
```
